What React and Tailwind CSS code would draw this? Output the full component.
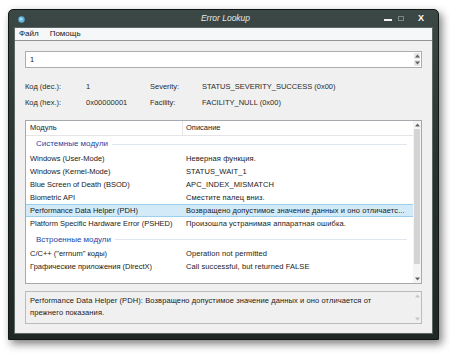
import React from "react";

const rows1 = [
  ["Windows (User-Mode)", "Неверная функция."],
  ["Windows (Kernel-Mode)", "STATUS_WAIT_1"],
  ["Blue Screen of Death (BSOD)", "APC_INDEX_MISMATCH"],
  ["Biometric API", "Сместите палец вниз."],
  ["Performance Data Helper (PDH)", "Возвращено допустимое значение данных и оно отличаетс..."],
  ["Platform Specific Hardware Error (PSHED)", "Произошла устранимая аппаратная ошибка."],
];
const rows2 = [
  ["C/C++ (\"errnum\" коды)", "Operation not permitted"],
  ["Графические приложения (DirectX)", "Call successful, but returned FALSE"],
];

function Row({ a, b, sel }) {
  return (
    <div
      className={
        "flex h-[13px] items-center " +
        (sel ? "bg-[#d3ebf9] border-y border-[#9ccfee]" : "")
      }
    >
      <div className="w-[157px] pl-[4px] whitespace-nowrap overflow-hidden">{a}</div>
      <div className="flex-1 pl-[3px] whitespace-nowrap overflow-hidden tracking-[0.1px]">{b}</div>
    </div>
  );
}

function Group({ title, className }) {
  return (
    <div className={"flex items-center pl-[10px] pr-[6px] text-[#2446a8] text-[8px] " + className}>
      <span className="whitespace-nowrap">{title}</span>
      <div className="flex-1 ml-[4px] h-px bg-[#dfe6ef]" />
    </div>
  );
}

function Arrow({ up, color = "#606060" }) {
  return (
    <svg width="5" height="4" viewBox="0 0 5 4">
      {up ? (
        <path d="M0 3.5 L2.5 0.5 L5 3.5 Z" fill={color} />
      ) : (
        <path d="M0 0.5 L2.5 3.5 L5 0.5 Z" fill={color} />
      )}
    </svg>
  );
}

export default function App() {
  return (
    <div className="w-[450px] h-[354px] bg-white overflow-hidden pl-[8px] pt-[9px] font-['Liberation_Sans',Arial,sans-serif] text-[7.5px] text-[#1a1a1a]">
      <div className="w-[431px] h-[331px] flex flex-col rounded-t-[5px] bg-gradient-to-b from-[#3c4845] via-[#27312f] to-[#1f2826] shadow-[3px_4px_9px_rgba(0,0,0,0.5)] border border-[#121816]">
        {/* title bar */}
        <div className="h-[17px] flex items-center relative">
          <svg className="ml-[9px] mt-[1px]" width="7" height="7" viewBox="0 0 7 7">
            <circle cx="3.5" cy="3.5" r="3.2" fill="#5ab4e0" />
            <circle cx="3" cy="3" r="1.6" fill="#a9dcf3" />
          </svg>
          <div className="absolute inset-0 flex items-center justify-center italic text-[#e6e9e8] text-[8.5px] pl-[4px]">Error Lookup</div>
          <div className="flex-1" />
          <div className="flex items-center mr-[14px]">
            <div className="w-[8px] h-[2px] bg-[#f2f2f2] mt-[2px]" />
            <div className="ml-[6px] w-[6px] h-[5px] border border-[#7c8784]" />
            <div className="ml-[14px] text-[#ffffff] font-bold text-[9px] leading-none">X</div>
          </div>
        </div>
        {/* client */}
        <div className="ml-[5px] mr-[5px] mb-[5px] flex-1 flex flex-col bg-[#f0f0f0] border border-[#5d6866]">
          <div className="h-[12px] flex items-center bg-[#f6f7f8] gap-[11px] pl-[4px] text-[8px]">
            <span>Файл</span>
            <span>Помощь</span>
          </div>
          <div className="h-px bg-[#8f9394]" />
          <div className="flex flex-col px-[10px]">
            {/* input */}
            <div className="mt-[10px] h-[17px] w-[397px] bg-white border border-[#abadb3] flex items-center">
              <span className="pl-[4px] flex-1">1</span>
              <div className="flex flex-col mr-[1px] gap-px">
                <div className="w-[6px] h-[6px] bg-[#e6e6e6] flex items-center justify-center"><Arrow up /></div>
                <div className="w-[6px] h-[6px] bg-[#e6e6e6] flex items-center justify-center"><Arrow /></div>
              </div>
            </div>
            {/* info */}
            <div className="mt-[13px] grid grid-cols-[61px_64px_52px_1fr] gap-y-[4px] leading-[12px] text-[#2a2a2a]">
              <span>Код (dec.):</span>
              <span>1</span>
              <span>Severity:</span>
              <span>STATUS_SEVERITY_SUCCESS (0x00)</span>
              <span>Код (hex.):</span>
              <span>0x00000001</span>
              <span>Facility:</span>
              <span>FACILITY_NULL (0x00)</span>
            </div>
            {/* list */}
            <div className="mt-[11px] h-[164px] w-[397px] bg-white border border-[#a5a9ad] flex">
              <div className="flex-1 flex flex-col">
                <div className="h-[15px] flex items-center border-b border-[#e5e5e5]">
                  <div className="w-[157px] pl-[4px] h-full flex items-center border-r border-[#e5e5e5]">Модуль</div>
                  <div className="flex-1 pl-[3px]">Описание</div>
                </div>
                <Group title="Системные модули" className="h-[16px]" />
                {rows1.map((r, i) => (
                  <Row key={i} a={r[0]} b={r[1]} sel={i === 4} />
                ))}
                <Group title="Встроенные модули" className="h-[17px] pt-[2px]" />
                {rows2.map((r, i) => (
                  <Row key={i} a={r[0]} b={r[1]} />
                ))}
              </div>
              <div className="w-[8px] flex flex-col items-center bg-[#f4f4f4]">
                <div className="h-[8px] flex items-center"><Arrow up /></div>
                <div className="w-[6px] h-[135px] bg-[#d4d4d4] rounded-[1px]" />
                <div className="flex-1" />
                <div className="h-[8px] flex items-center"><Arrow /></div>
              </div>
            </div>
            {/* status */}
            <div className="mt-[7px] h-[33px] w-[397px] border border-[#b8bbbf] bg-[#f0f0f0] flex">
              <div className="flex-1 pl-[4px] pt-[3px] leading-[12px] tracking-[0.1px]">
                Performance Data Helper (PDH): Возвращено допустимое значение данных и оно отличается от
                <br />
                прежнего показания.
              </div>
              <div className="w-[8px] flex flex-col items-center justify-between py-[2px]">
                <Arrow up color="#c4c4c4" />
                <Arrow color="#c4c4c4" />
              </div>
            </div>
          </div>
        </div>
      </div>
    </div>
  );
}
